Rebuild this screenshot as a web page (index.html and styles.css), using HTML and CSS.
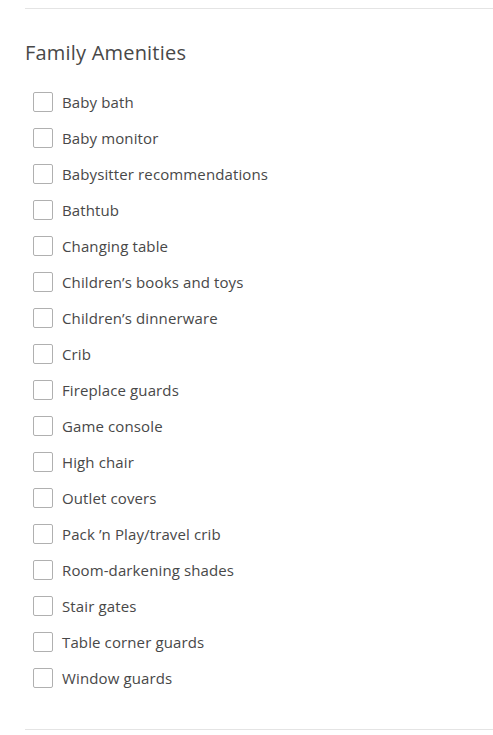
FILE: index.html
```html
<!DOCTYPE html>
<html lang="en">
   <head>
      <meta charset="UTF-8" />
      <meta name="viewport" content="width=device-width, initial-scale=1.0" />
      <title>Family Amenities</title>
      <link rel="stylesheet" href="styles.css">
   </head>
   <body>
      <div class="page">
         <hr class="divider">
         <div class="section">
            <h2>Family Amenities</h2>
            <ul class="amenities">
               <li><label><span class="box"></span>Baby bath</label></li>
               <li><label><span class="box"></span>Baby monitor</label></li>
               <li><label><span class="box"></span>Babysitter recommendations</label></li>
               <li><label><span class="box"></span>Bathtub</label></li>
               <li><label><span class="box"></span>Changing table</label></li>
               <li><label><span class="box"></span>Children’s books and toys</label></li>
               <li><label><span class="box"></span>Children’s dinnerware</label></li>
               <li><label><span class="box"></span>Crib</label></li>
               <li><label><span class="box"></span>Fireplace guards</label></li>
               <li><label><span class="box"></span>Game console</label></li>
               <li><label><span class="box"></span>High chair</label></li>
               <li><label><span class="box"></span>Outlet covers</label></li>
               <li><label><span class="box"></span>Pack ’n Play/travel crib</label></li>
               <li><label><span class="box"></span>Room-darkening shades</label></li>
               <li><label><span class="box"></span>Stair gates</label></li>
               <li><label><span class="box"></span>Table corner guards</label></li>
               <li><label><span class="box"></span>Window guards</label></li>
            </ul>
         </div>
         <hr class="divider">
      </div>
   </body>
</html>
```

FILE: styles.css
```css
* {
   box-sizing: border-box;
}

body {
   margin: 0;
   background-color: #fff;
   font-family: 'Open Sans', 'Noto Sans', sans-serif;
   color: #484848;
}

.page {
   padding: 8px 0 0 25px;
}

.divider {
   margin: 0;
   border: 0;
   border-top: 1px solid #e4e4e4;
}

.section {
   padding: 30px 0 33px 0;
}

h2 {
   margin: 0;
   font-size: 20px;
   line-height: 28px;
   font-weight: normal;
   letter-spacing: 0.2px;
   color: #484848;
}

.amenities {
   list-style: none;
   margin: 17px 0 0 0;
   padding: 0 0 0 8px;
}

.amenities li {
   height: 36px;
   display: flex;
   align-items: center;
}

.amenities label {
   display: flex;
   align-items: center;
   gap: 9px;
   font-size: 15px;
   letter-spacing: 0.12px;
   cursor: pointer;
}

.box {
   width: 20px;
   height: 20px;
   border: 1px solid #b0b0b0;
   border-radius: 2px;
   background: #fff;
}
```
